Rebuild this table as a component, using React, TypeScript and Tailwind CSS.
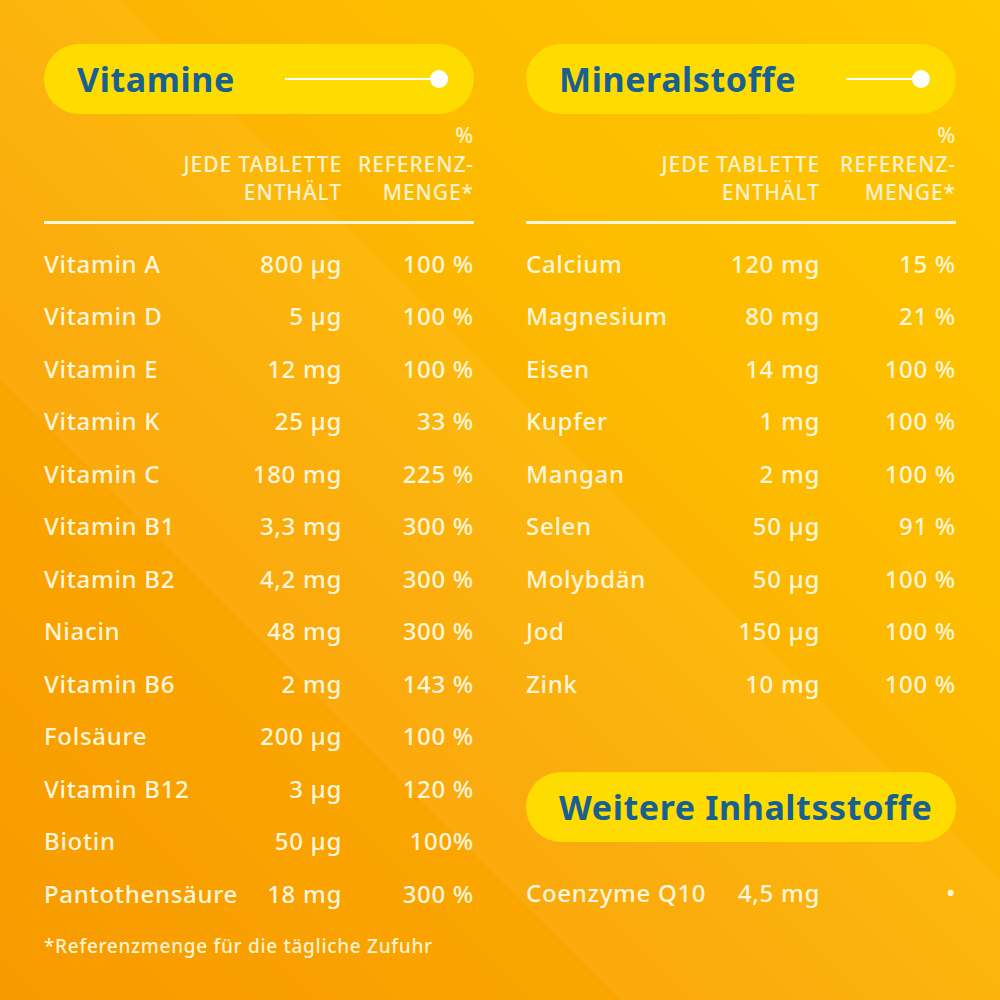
const vitamine: [string, string, string][] = [
  ["Vitamin A", "800 µg", "100 %"],
  ["Vitamin D", "5 µg", "100 %"],
  ["Vitamin E", "12 mg", "100 %"],
  ["Vitamin K", "25 µg", "33 %"],
  ["Vitamin C", "180 mg", "225 %"],
  ["Vitamin B1", "3,3 mg", "300 %"],
  ["Vitamin B2", "4,2 mg", "300 %"],
  ["Niacin", "48 mg", "300 %"],
  ["Vitamin B6", "2 mg", "143 %"],
  ["Folsäure", "200 µg", "100 %"],
  ["Vitamin B12", "3 µg", "120 %"],
  ["Biotin", "50 µg", "100%"],
  ["Pantothensäure", "18 mg", "300 %"],
];

const mineralstoffe: [string, string, string][] = [
  ["Calcium", "120 mg", "15 %"],
  ["Magnesium", "80 mg", "21 %"],
  ["Eisen", "14 mg", "100 %"],
  ["Kupfer", "1 mg", "100 %"],
  ["Mangan", "2 mg", "100 %"],
  ["Selen", "50 µg", "91 %"],
  ["Molybdän", "50 µg", "100 %"],
  ["Jod", "150 µg", "100 %"],
  ["Zink", "10 mg", "100 %"],
];

function Pill({ title, slider = true }: { title: string; slider?: boolean }) {
  return (
    <div className="flex h-[70px] items-center rounded-full bg-[#ffdc00] pl-[33px] pr-[35px]">
      <h2 className="whitespace-nowrap text-[34px] font-bold leading-none tracking-[0.6px] text-[#17608f]">
        {title}
      </h2>
      {slider && (
        <div className="ml-[50px] flex flex-1 items-center">
          <div className="h-[2px] flex-1 bg-white" />
          <div className="-mr-[9px] h-[18px] w-[18px] rounded-full bg-white" />
        </div>
      )}
    </div>
  );
}

function TableHead({ lastCol }: { lastCol: string }) {
  return (
    <div className="mt-[7px] flex items-end justify-end text-[21px] font-medium uppercase leading-[28.5px] tracking-[0.9px] text-[#fff3d0]">
      <div className="text-right">
        Jede Tablette
        <br />
        Enthält
      </div>
      <div className={`${lastCol} text-right`}>
        %
        <br />
        Referenz-
        <br />
        Menge*
      </div>
    </div>
  );
}

function Row({ cells, lastCol }: { cells: [string, string, string]; lastCol: string }) {
  return (
    <div className="flex h-[52.5px] items-center text-[24px] font-medium tracking-[0.7px] text-[#fff6dc]">
      <span className="whitespace-nowrap">{cells[0]}</span>
      <span className="flex-1 whitespace-nowrap text-right">{cells[1]}</span>
      <span className={`${lastCol} whitespace-nowrap text-right`}>{cells[2]}</span>
    </div>
  );
}

export default function App() {
  return (
    <div
      className="relative h-[1000px] w-[1000px] overflow-hidden bg-[linear-gradient(45deg,#f79a00_0%,#fba800_38%,#fdbb00_65%,#ffc800_100%)] px-[44px] pt-[44px]"
      style={{ fontFamily: '"Noto Sans", "Open Sans", sans-serif' }}
    >
      <div className="pointer-events-none absolute inset-0 bg-[linear-gradient(45deg,transparent_31%,rgba(255,255,255,0.05)_31%,rgba(255,255,255,0.05)_56%,transparent_56%)]" />
      <div className="relative grid grid-cols-[430px_430px] gap-x-[52px]">
        <section>
          <Pill title="Vitamine" />
          <TableHead lastCol="w-[132px]" />
          <div className="mt-[14px] h-[3px] bg-[#fff6dc]" />
          <div className="mt-[14px]">
            {vitamine.map((v) => (
              <Row key={v[0]} cells={v} lastCol="w-[132px]" />
            ))}
          </div>
          <p className="mt-[14px] whitespace-nowrap text-[19px] font-medium leading-[24px] tracking-[0.7px] text-[#fff3d0]">
            *Referenzmenge für die tägliche Zufuhr
          </p>
        </section>
        <section>
          <Pill title="Mineralstoffe" />
          <TableHead lastCol="w-[136px]" />
          <div className="mt-[14px] h-[3px] bg-[#fff6dc]" />
          <div className="mt-[14px]">
            {mineralstoffe.map((v) => (
              <Row key={v[0]} cells={v} lastCol="w-[136px]" />
            ))}
          </div>
          <div className="mt-[62px]">
            <Pill title="Weitere Inhaltsstoffe" slider={false} />
          </div>
          <div className="mt-[25px]">
            <Row cells={["Coenzyme Q10", "4,5 mg", "•"]} lastCol="w-[136px]" />
          </div>
        </section>
      </div>
    </div>
  );
}
